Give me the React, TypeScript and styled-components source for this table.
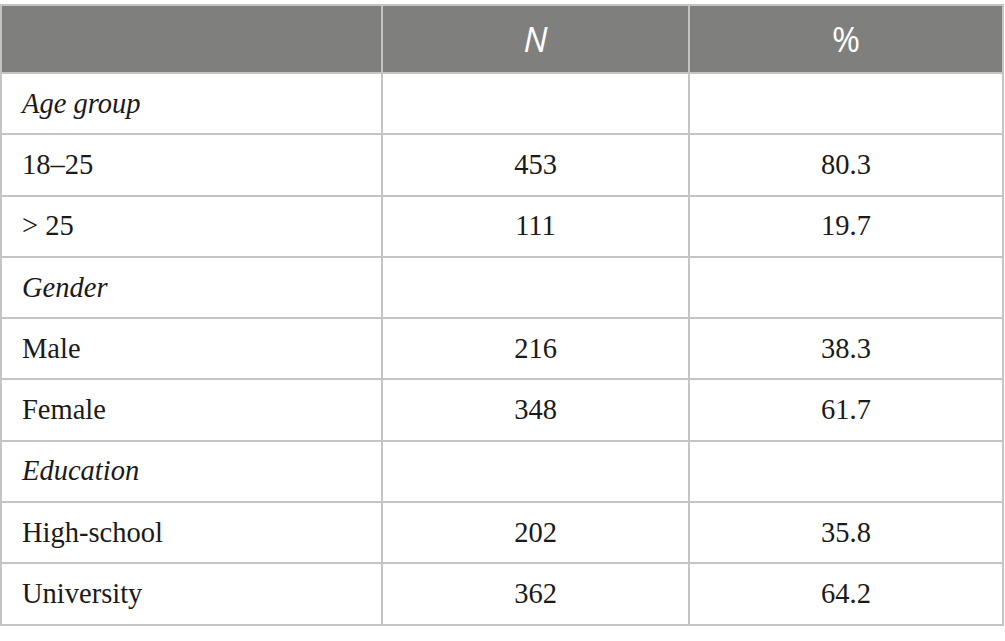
import React from "react";
import styled, { createGlobalStyle } from "styled-components";

const Global = createGlobalStyle`
  html, body { margin: 0; padding: 0; background: #ffffff; }
  body { font-family: "Liberation Serif", "Times New Roman", serif; }
`;

const Page = styled.div`
  padding-top: 4px;
  width: 1005px;
`;

const Table = styled.table`
  border-collapse: collapse;
  table-layout: fixed;
  width: 1004px;
  border: 2px solid #c4c4c4;
`;

const HeadCell = styled.th<{ $w?: number }>`
  background: #7f807e;
  color: #ffffff;
  font-family: "Open Sans", "Noto Sans", sans-serif;
  font-weight: 400;
  font-size: 34px;
  height: 66px;
  padding: 0;
  text-align: center;
  border: 2px solid #c4c4c4;
  border-top: none;
  width: ${(p) => (p.$w ? `${p.$w}px` : "auto")};
`;

const Cell = styled.td<{ $center?: boolean; $italic?: boolean }>`
  height: 59.3px;
  padding: 0 0 0 20px;
  font-family: "Liberation Serif", "Times New Roman", serif;
  font-size: 28.5px;
  color: #1a1a1a;
  font-style: ${(p) => (p.$italic ? "italic" : "normal")};
  text-align: ${(p) => (p.$center ? "center" : "left")};
  ${(p) => (p.$center ? "padding: 0;" : "")}
  border: 2px solid #c4c4c4;
  vertical-align: middle;
`;

type Row = { label: string; n?: string; pct?: string; group?: boolean };

const rows: Row[] = [
  { label: "Age group", group: true },
  { label: "18–25", n: "453", pct: "80.3" },
  { label: "> 25", n: "111", pct: "19.7" },
  { label: "Gender", group: true },
  { label: "Male", n: "216", pct: "38.3" },
  { label: "Female", n: "348", pct: "61.7" },
  { label: "Education", group: true },
  { label: "High-school", n: "202", pct: "35.8" },
  { label: "University", n: "362", pct: "64.2" },
];

export default function App() {
  return (
    <Page>
      <Global />
      <Table>
        <thead>
          <tr>
            <HeadCell $w={379} />
            <HeadCell $w={305}>
              <i>N</i>
            </HeadCell>
            <HeadCell>%</HeadCell>
          </tr>
        </thead>
        <tbody>
          {rows.map((r) => (
            <tr key={r.label}>
              <Cell $italic={r.group}>{r.label}</Cell>
              <Cell $center>{r.n ?? ""}</Cell>
              <Cell $center>{r.pct ?? ""}</Cell>
            </tr>
          ))}
        </tbody>
      </Table>
    </Page>
  );
}
